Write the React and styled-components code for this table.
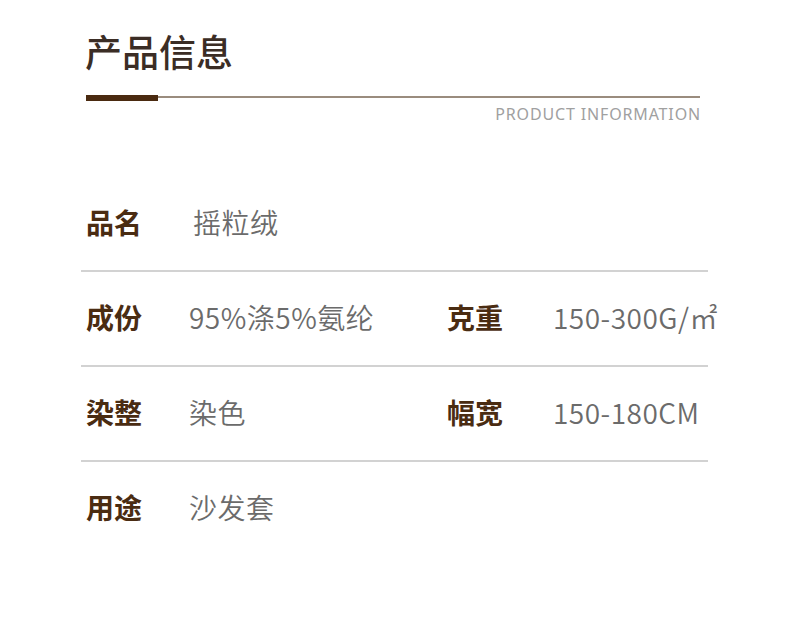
import React from "react";
import styled, { createGlobalStyle } from "styled-components";

const GlobalStyle = createGlobalStyle`
  html, body {
    margin: 0;
    padding: 0;
    background: #ffffff;
  }
  body {
    font-family: "Noto Sans CJK SC", "Noto Sans", sans-serif;
  }
`;

const Page = styled.div`
  width: 790px;
  height: 621px;
  background: #fff;
  padding: 25px 0 0 81px;
  box-sizing: border-box;
`;

const Header = styled.header`
  width: 619px;
  padding-left: 5px;
  box-sizing: border-box;
`;

const Title = styled.h1`
  margin: 0;
  font-size: 37px;
  font-weight: 500;
  line-height: 52px;
  color: #3b2d25;
  margin-left: -1px;
`;

const Rule = styled.div`
  display: flex;
  align-items: flex-start;
  margin-top: 18px;
`;

const ThickBar = styled.span`
  width: 72px;
  height: 6px;
  background: #4a2a10;
`;

const ThinLine = styled.span`
  flex: 1;
  height: 2px;
  margin-top: 1px;
  background: #9a8c7e;
`;

const Subtitle = styled.div`
  text-align: right;
  font-family: "Noto Sans", "Open Sans", sans-serif;
  font-size: 16px;
  line-height: 20px;
  margin-top: 3px;
  color: #a0a0a0;
  letter-spacing: 0.85px;
  margin-right: -1px;
`;

const Table = styled.div`
  width: 627px;
  margin-top: 53px;
`;

const Row = styled.div`
  display: grid;
  grid-template-columns: 103px 258px 106px auto;
  align-items: center;
  box-sizing: border-box;
  height: 95px;
  padding: 0 0 4px 5px;
  border-bottom: ${(p) => (p.$last ? "2px solid transparent" : "2px solid #d2d2d2")};
`;

const Label = styled.span`
  font-size: 28px;
  font-weight: 700;
  color: #4a2c12;
  white-space: nowrap;
`;

const Value = styled.span`
  font-size: 28px;
  font-weight: 350;
  color: #6b6b6b;
  white-space: nowrap;
  letter-spacing: 0.5px;
  padding-left: ${(p) => p.$indent || 0}px;
`;

const rows = [
  [["品名", "摇粒绒", 4]],
  [
    ["成份", "95%涤5%氨纶"],
    ["克重", "150-300G/㎡"],
  ],
  [
    ["染整", "染色"],
    ["幅宽", "150-180CM"],
  ],
  [["用途", "沙发套"]],
];

export default function App() {
  return (
    <>
      <GlobalStyle />
      <Page>
        <Header>
          <Title>产品信息</Title>
          <Rule>
            <ThickBar />
            <ThinLine />
          </Rule>
          <Subtitle>PRODUCT INFORMATION</Subtitle>
        </Header>

        <Table>
          {rows.map((cells, i) => (
            <Row key={i} $last={i === rows.length - 1}>
              {cells.map(([label, value, indent]) => (
                <React.Fragment key={label}>
                  <Label>{label}</Label>
                  <Value $indent={indent}>{value}</Value>
                </React.Fragment>
              ))}
            </Row>
          ))}
        </Table>
      </Page>
    </>
  );
}
